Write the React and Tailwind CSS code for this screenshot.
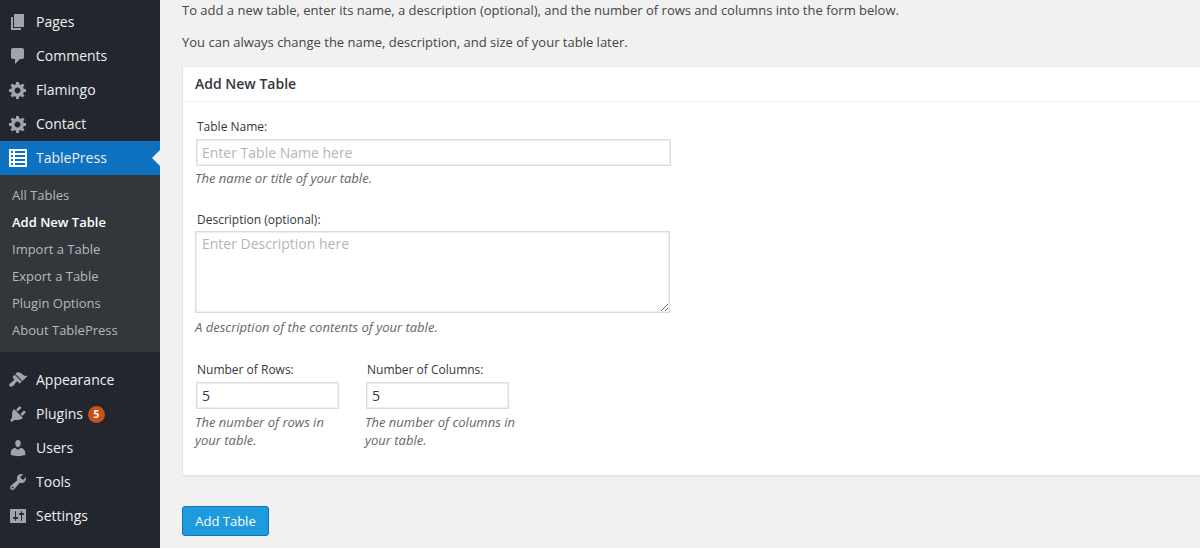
import React from 'react';

const GEAR = "M18 12h-2.18c-.17.7-.44 1.35-.81 1.93l1.54 1.54-2.1 2.1-1.54-1.54c-.58.36-1.23.63-1.91.79V19H8v-2.18c-.68-.16-1.33-.43-1.91-.79l-1.54 1.54-2.12-2.12 1.54-1.54c-.36-.58-.63-1.23-.79-1.91H1V9.03h2.17c.16-.7.44-1.35.8-1.94L2.43 5.55l2.1-2.1 1.54 1.54c.58-.37 1.24-.64 1.93-.81V2h3v2.18c.68.16 1.33.43 1.91.79l1.54-1.54 2.12 2.12-1.54 1.54c.36.59.64 1.24.8 1.94H18V12zm-8.5 1.5c1.66 0 3-1.34 3-3s-1.34-3-3-3-3 1.34-3 3 1.34 3 3 3z";

const ICONS = {
  pages: "M6 15V2h10v13H6zm-1 1h8v2H3V5h2v11z",
  comments: "M5 2h9q.82 0 1.41.59T16 4v7q0 .82-.59 1.41T14 13h-2l-5 5v-5H5q-.82 0-1.41-.59T3 11V4q0-.82.59-1.41T5 2z",
  gear: GEAR,
  appearance: "M14.48 11.06L7.41 3.99l1.5-1.5c.5-.56 2.3-.47 3.51.32 1.21.8 1.43 1.28 2.91 2.1 1.18.64 2.45 1.26 4.45.85zm-.71.71L6.7 4.7 4.93 6.47c-.39.39-.39 1.02 0 1.41l1.06 1.06c.39.39.39 1.03 0 1.42-.6.6-1.43 1.11-2.21 1.69-.35.26-.7.53-1.01.84C1.43 13.23.4 14.84 1.7 16.14c1.3 1.3 2.91.27 4.25-1.07.31-.31.58-.66.84-1.01.58-.78 1.09-1.61 1.69-2.21.39-.39 1.03-.39 1.42 0l1.06 1.06c.39.39 1.02.39 1.41 0z",
  plugins: "M13.11 4.36L9.87 7.6 8 5.73l3.24-3.24c.35-.34 1.05-.2 1.56.32.52.51.66 1.21.31 1.55zm-8 1.77l.91-1.12 9.01 9.01-1.19.84c-.71.71-2.63 1.16-3.82 1.16H6.14L4.9 17.26c-.59.59-1.54.59-2.12 0-.59-.58-.59-1.53 0-2.12l1.24-1.24v-3.88c0-1.13.4-3.19 1.09-3.89zm7.26 3.97l3.24-3.24c.34-.35 1.04-.21 1.55.31.52.51.66 1.21.31 1.55l-3.24 3.25z",
  users: "M10 9.25c-2.27 0-2.73-3.44-2.73-3.44C7 4.02 7.82 2 9.97 2c2.16 0 2.98 2.02 2.71 3.81 0 0-.41 3.44-2.68 3.44zm0 2.57L12.72 10c2.39 0 4.52 2.33 4.52 4.53v2.49s-3.65 1.13-7.24 1.13c-3.65 0-7.24-1.13-7.24-1.13v-2.49c0-2.25 1.94-4.48 4.47-4.48z",
  tools: "M16.68 9.77c-1.34 1.34-3.3 1.67-4.95.99l-5.41 6.52c-.99.99-2.59.99-3.58 0s-.99-2.59 0-3.57l6.52-5.42c-.68-1.65-.35-3.61.99-4.95 1.28-1.28 3.12-1.62 4.72-1.06l-2.89 2.89 2.82 2.82 2.86-2.87c.53 1.58.18 3.39-1.08 4.65zM3.81 16.21c.4.39 1.04.39 1.43 0 .4-.4.4-1.04 0-1.43-.39-.4-1.03-.4-1.43 0-.39.39-.39 1.03 0 1.43z",
  settings: "M18 16V4c0-.55-.45-1-1-1H3c-.55 0-1 .45-1 1v12c0 .55.45 1 1 1h14c.55 0 1-.45 1-1zM8 11h1c.55 0 1 .45 1 1s-.45 1-1 1H8v1.5c0 .28-.22.5-.5.5s-.5-.22-.5-.5V13H6c-.55 0-1-.45-1-1s.45-1 1-1h1V5.5c0-.28.22-.5.5-.5s.5.22.5.5V11zm5-2h-1c-.55 0-1-.45-1-1s.45-1 1-1h1V5.5c0-.28.22-.5.5-.5s.5.22.5.5V7h1c.55 0 1 .45 1 1s-.45 1-1 1h-1v5.5c0 .28-.22.5-.5.5s-.5-.22-.5-.5V9z",
};

const MenuIcon = ({ name }) => (
  <svg viewBox="0 0 20 20" className="w-5 h-5 shrink-0 fill-[#a0a5aa]">
    <path fillRule="evenodd" d={ICONS[name]} />
  </svg>
);

const TableIcon = () => (
  <svg viewBox="0 0 18 18" className="w-[18px] h-[18px] mx-px shrink-0">
    <path
      fill="#fff"
      fillRule="evenodd"
      d="M0 0h18v18H0zM2 2v2h2V2zM6 2v2h10V2zM2 6v2h2V6zM6 6v2h10V6zM2 10v2h2v-2zM6 10v2h10v-2zM2 14v2h2v-2zM6 14v2h10v-2z"
    />
  </svg>
);

const MenuItem = ({ icon, label, children }) => (
  <div className="h-[34px] flex items-center pl-2 text-[14px] text-[#eeeeee]">
    <MenuIcon name={icon} />
    <span className="ml-2 pb-[2px]">{label}</span>
    {children}
  </div>
);

const subItems = ["All Tables", "Add New Table", "Import a Table", "Export a Table", "Plugin Options", "About TablePress"];

const Sidebar = () => (
  <aside className="w-40 shrink-0 bg-[#22262f] pt-[5px]">
    <MenuItem icon="pages" label="Pages" />
    <MenuItem icon="comments" label="Comments" />
    <MenuItem icon="gear" label="Flamingo" />
    <MenuItem icon="gear" label="Contact" />

    <div className="relative h-[34px] flex items-center pl-2 text-[14px] text-[#eeeeee] bg-[#0f72c0]">
      <TableIcon />
      <span className="ml-2 pb-[2px]">TablePress</span>
      <span className="absolute right-0 top-[9px] border-y-8 border-r-8 border-y-transparent border-r-[#f1f1f1]" />
    </div>
    <div className="bg-[#32373c] pt-[7px] pb-2 mb-[11px]">
      {subItems.map((item) => (
        <div
          key={item}
          className={`h-[27px] pl-3 flex items-center text-[13px] ${
            item === "Add New Table" ? "font-semibold text-white" : "text-[#b4b9be]"
          }`}
        >
          {item}
        </div>
      ))}
    </div>

    <MenuItem icon="appearance" label="Appearance" />
    <MenuItem icon="plugins" label="Plugins">
      <span className="ml-[5px] w-[17px] h-[17px] rounded-full bg-[#c9501c] text-white text-[10px] font-bold flex items-center justify-center">
        5
      </span>
    </MenuItem>
    <MenuItem icon="users" label="Users" />
    <MenuItem icon="tools" label="Tools" />
    <MenuItem icon="settings" label="Settings" />
  </aside>
);

const Help = ({ children, className = "" }) => (
  <p className={`italic text-[13px] leading-[18px] text-[#666666] ${className}`}>{children}</p>
);

const Label = ({ children }) => (
  <label className="block pl-[2px] text-[12px] leading-[18px] text-[#32373c]">{children}</label>
);

const fieldClass =
  "block border border-[#dcdcdc] shadow-[inset_0_0_0_1px_#eeeeee] bg-white text-[14px] text-[#32373c] placeholder:text-[#b5b5b5] outline-none";

export default function App() {
  return (
    <div
      className="w-[1200px] h-[548px] flex overflow-hidden bg-[#f1f1f1] text-[#444444]"
      style={{ fontFamily: '"Open Sans", sans-serif' }}
    >
      <Sidebar />
      <main className="flex-1 min-w-0 pl-[22px]">
        <p className="text-[13px] leading-[20px]">
          To add a new table, enter its name, a description (optional), and the number of rows and columns into the form below.
        </p>
        <p className="text-[13px] leading-[20px] mt-[12px]">
          You can always change the name, description, and size of your table later.
        </p>

        <section className="mt-[14px] -mr-3 h-[410px] bg-white border border-[#e5e5e5] shadow-[0_1px_1px_rgba(0,0,0,0.04)]">
          <h2 className="h-[35px] flex items-center pl-3 pb-[2px] text-[14px] font-semibold text-[#32373c] border-b border-[#eeeeee]">
            Add New Table
          </h2>
          <div className="pl-3 pt-4">
            <Label>Table Name:</Label>
            <input
              className={`${fieldClass} w-[475px] h-[27px] ml-px mt-[3px] px-[5px]`}
              placeholder="Enter Table Name here"
              readOnly
            />
            <Help className="mt-[3px]">The name or title of your table.</Help>

            <div className="mt-[24px]">
              <Label>Description (optional):</Label>
              <textarea
                className={`${fieldClass} w-[475px] h-[82px] mt-[2px] px-[6px] pt-[1px] resize-y`}
                placeholder="Enter Description here"
                readOnly
              />
              <Help className="mt-[5px]">A description of the contents of your table.</Help>
            </div>

            <div className="flex mt-[25px]">
              <div className="w-[170px]">
                <Label>Number of Rows:</Label>
                <input className={`${fieldClass} w-[143px] h-[27px] ml-px mt-[3px] px-[5px]`} value="5" readOnly />
                <Help className="mt-[4px] w-[155px]">The number of rows in your table.</Help>
              </div>
              <div className="w-[170px]">
                <Label>Number of Columns:</Label>
                <input className={`${fieldClass} w-[143px] h-[27px] ml-px mt-[3px] px-[5px]`} value="5" readOnly />
                <Help className="mt-[4px] w-[155px]">The number of columns in your table.</Help>
              </div>
            </div>
          </div>
        </section>

        <button className="mt-[30px] w-[87px] h-[30px] pt-px rounded-[3px] bg-[#1e9bdc] border border-[#0f72c0] text-white text-[13px]">
          Add Table
        </button>
      </main>
    </div>
  );
}
